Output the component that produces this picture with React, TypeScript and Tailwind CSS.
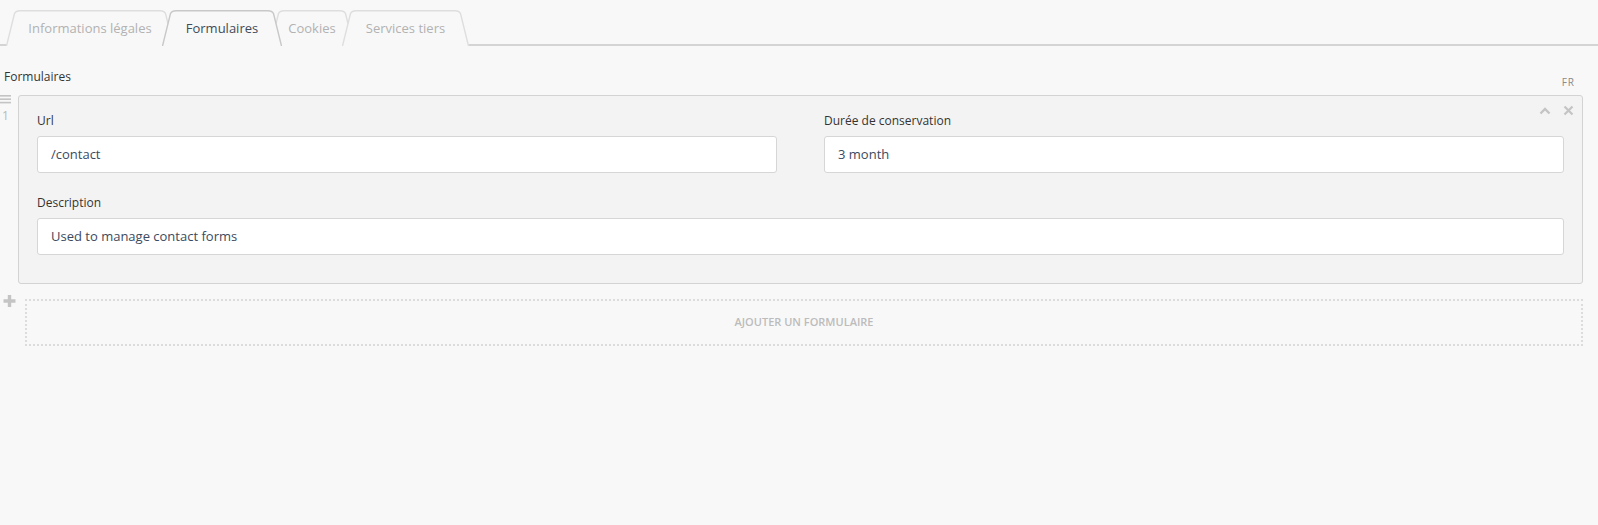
import React from "react";

const font = { fontFamily: '"Open Sans", "Noto Sans", sans-serif' };

function TabShape({ w, active }: { w: number; active?: boolean }) {
  const h = 36;
  const s = 10;
  const d = `M0.5 ${h} L${s - 1.5} 3.5 Q${s} 0.7 ${s + 4} 0.7 L${w - s - 4} 0.7 Q${w - s} 0.7 ${
    w - s + 1.5
  } 3.5 L${w - 0.5} ${h}`;
  return (
    <svg className="absolute left-0 top-0" width={w} height={h} viewBox={`0 0 ${w} ${h}`} aria-hidden>
      <path d={d} fill="#f8f8f8" stroke={active ? "#c8c8c8" : "#dedede"} strokeWidth="1.4" />
    </svg>
  );
}

const tabs = [
  { label: "Informations légales", w: 168, cls: "w-[168px]" },
  { label: "Formulaires", w: 120, cls: "w-[120px]", active: true },
  { label: "Cookies", w: 84, cls: "w-[84px]" },
  { label: "Services tiers", w: 127, cls: "w-[127px]" },
];

function Tabs() {
  return (
    <div className="flex h-[46px] items-end border-b-2 border-[#d4d4d4] pl-[6px]">
      {tabs.map((t, i) => (
        <div
          key={t.label}
          className={`relative -mb-[2px] flex h-[36px] shrink-0 items-center justify-center ${t.cls} ${
            i > 0 ? "-ml-[12px]" : ""
          } ${t.active ? "z-10 text-[#3f4a5a]" : "text-[#b2b2b2]"} text-[13px]`}
        >
          <TabShape w={t.w} active={t.active} />
          <span className="relative pt-[1px]">{t.label}</span>
        </div>
      ))}
    </div>
  );
}

function Field({ label, value }: { label: string; value: string }) {
  return (
    <div className="flex flex-col">
      <label className="mb-[7px] h-[17px] text-[12px] leading-[17px] text-[#333]">{label}</label>
      <div className="flex h-[37px] items-center rounded-[3px] border border-[#d6d6d6] bg-white px-[13px] text-[13px] text-[#3b4a60]">
        {value}
      </div>
    </div>
  );
}

export default function App() {
  return (
    <div className="min-h-[525px] bg-[#f8f8f8]" style={font}>
      <Tabs />
      <div className="pr-[15px]">
        <div className="flex items-end justify-between pt-[22px]">
          <span className="pl-[4px] text-[12px] leading-[17px] text-[#333]">Formulaires</span>
          <span className="-mb-[4px] pr-[8px] text-[10px] leading-[14px] tracking-[1px] text-[#8a8a8a]">FR</span>
        </div>

        <div className="mt-[10px] flex">
          <div className="flex w-[18px] shrink-0 flex-col items-start text-[#bdbdbd]">
            <svg width="11" height="9" viewBox="0 0 11 9" aria-hidden>
              <rect x="0" y="0" width="11" height="1.6" fill="#c4c4c4" />
              <rect x="0" y="3.4" width="11" height="1.6" fill="#c4c4c4" />
              <rect x="0" y="6.8" width="11" height="1.6" fill="#c4c4c4" />
            </svg>
            <span className="pl-[2px] pt-[5px] text-[12px] leading-[14px] text-[#b8b8b8]">1</span>
          </div>

          <div className="relative flex-1 rounded-[3px] border border-[#d3d3d3] bg-[#f3f3f3] px-[18px] pb-[28px] pt-[16px]">
            <div className="absolute right-[8px] top-[9px] flex items-center gap-[12px]">
              <svg width="12" height="8" viewBox="0 0 12 8" aria-hidden>
                <path d="M1.5 6.5 L6 2 L10.5 6.5" fill="none" stroke="#c4c4c4" strokeWidth="2.4" />
              </svg>
              <svg width="11" height="11" viewBox="0 0 11 11" aria-hidden>
                <path d="M1.5 1.5 L9.5 9.5 M9.5 1.5 L1.5 9.5" stroke="#c4c4c4" strokeWidth="2.2" />
              </svg>
            </div>
            <div className="grid grid-cols-2 gap-x-[47px]">
              <Field label="Url" value="/contact" />
              <Field label="Durée de conservation" value="3 month" />
            </div>
            <div className="mt-[21px]">
              <Field label="Description" value="Used to manage contact forms" />
            </div>
          </div>
        </div>

        <div className="mt-[11px] flex">
          <div className="flex w-[25px] shrink-0 pl-[3px]">
            <svg width="13" height="12" viewBox="0 0 13 12" aria-hidden>
              <path d="M6.5 0 V12 M0.5 6 H12.5" stroke="#c4c4c4" strokeWidth="3.4" />
            </svg>
          </div>
          <div className="mt-[4px] flex h-[47px] flex-1 items-center justify-center border-2 border-dotted border-[#dcdcdc] text-[11px] font-semibold uppercase text-[#bcbcbc]">
            Ajouter un formulaire
          </div>
        </div>
      </div>
    </div>
  );
}
